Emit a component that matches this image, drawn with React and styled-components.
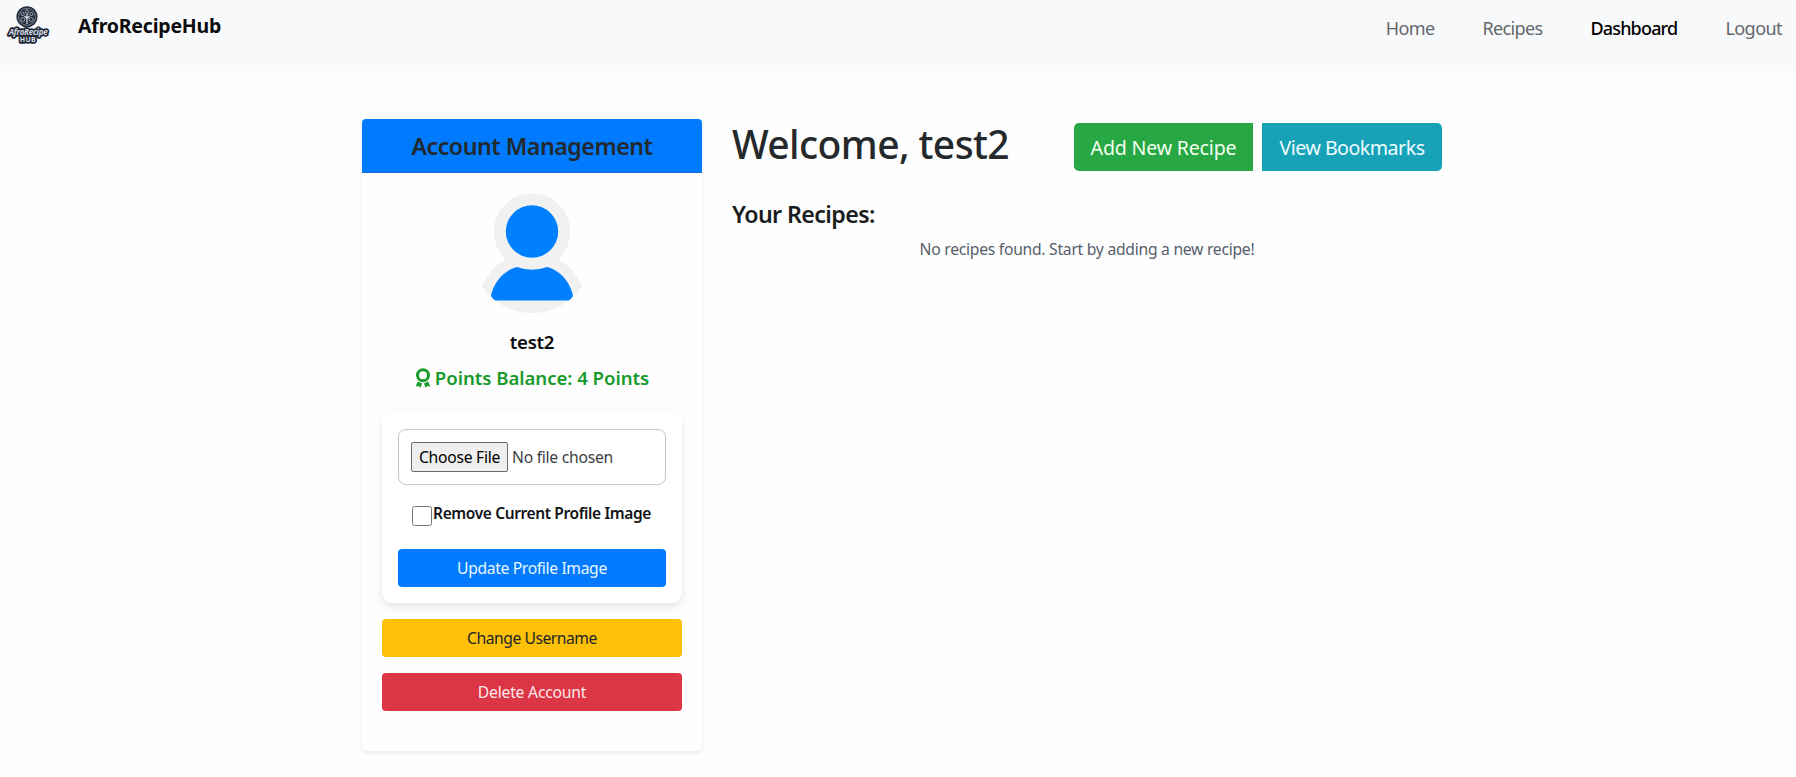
import React from "react";
import styled, { createGlobalStyle } from "styled-components";

const GlobalStyle = createGlobalStyle`
  * { box-sizing: border-box; }
  body {
    margin: 0;
    background: #fefefe;
    color: #212529;
    font-family: "Noto Sans", "Open Sans", sans-serif;
    font-size: 15.7px;
    line-height: 24px;
  }
  h1, h2, h3, p { margin: 0; }
  button { font-family: inherit; }
`;

const Navbar = styled.header`
  display: flex;
  justify-content: space-between;
  align-items: flex-start;
  height: 71px;
  padding: 4px 14px 0 4px;
  background: #f8f9fb;
`;

const Brand = styled.a`
  display: flex;
  align-items: flex-start;
  gap: 26px;
`;

const LogoMark = styled.svg`
  display: block;
  width: 48px;
  height: 48px;
  overflow: visible;
`;

const BrandName = styled.span`
  margin-top: 10px;
  color: #0b0c0e;
  font-size: 19.5px;
  font-weight: 700;
  letter-spacing: -0.2px;
`;

const Nav = styled.nav`
  display: flex;
  gap: 48px;
  padding-top: 12px;
`;

const NavLink = styled.a`
  color: ${(p) => (p.$active ? "#000" : "#63666a")};
  font-size: 18px;
  font-weight: ${(p) => (p.$active ? 500 : 400)};
  letter-spacing: ${(p) => p.$track}px;
  white-space: nowrap;
`;

const Page = styled.main`
  display: flex;
  align-items: flex-start;
  gap: 30px;
  padding: 48px 354px 12px 362px;
`;

const Card = styled.aside`
  width: 340px;
  border-radius: 4px;
  background: #fefefe;
  box-shadow: 0 2px 4px rgba(0, 0, 0, 0.085);
`;

const CardHeader = styled.div`
  display: flex;
  align-items: center;
  justify-content: center;
  height: 54px;
  border-bottom: 1px solid #0a6bd6;
  border-radius: 4px 4px 0 0;
  background: #007bff;
`;

const CardTitle = styled.h3`
  color: #23292c;
  font-size: 23.2px;
  font-weight: 600;
  line-height: 28px;
  letter-spacing: -0.48px;
`;

const CardBody = styled.div`
  display: flex;
  flex-direction: column;
  padding: 20px 20px 40px;
`;

const Avatar = styled.svg`
  display: block;
  width: 120px;
  height: 120px;
  margin: 0 auto;
`;

const Username = styled.p`
  margin-top: 17px;
  color: #0c0d0e;
  font-size: 18.6px;
  font-weight: 600;
  letter-spacing: -0.3px;
  text-align: center;
`;

const Points = styled.p`
  display: flex;
  align-items: center;
  justify-content: center;
  gap: 4px;
  margin-top: 12px;
  color: #189a2d;
  font-size: 18.6px;
  font-weight: 600;
  letter-spacing: -0.03px;
  white-space: nowrap;
`;

const MedalIcon = styled.svg`
  width: 16px;
  height: 20px;
  margin-top: -1px;
`;

const ImageForm = styled.form`
  display: flex;
  flex-direction: column;
  margin-top: 22px;
  padding: 17px 16px 16px;
  border-radius: 10px;
  background: #fff;
  box-shadow: 0 4px 8px rgba(0, 0, 0, 0.1);
`;

const FileField = styled.div`
  display: flex;
  align-items: center;
  gap: 4px;
  height: 56px;
  padding-left: 12px;
  border: 1px solid #c6c6c6;
  border-radius: 8px;
`;

const ChooseFile = styled.button`
  width: 97px;
  height: 30px;
  padding: 0;
  border: 1px solid #6c6c6c;
  border-radius: 2px;
  background: #efefef;
  color: #000;
  font-size: 15.7px;
  line-height: 24px;
  letter-spacing: -0.28px;
`;

const FileName = styled.span`
  color: #3c4043;
  letter-spacing: -0.27px;
`;

const CheckRow = styled.label`
  display: flex;
  justify-content: center;
  align-items: flex-start;
  height: 27px;
  margin: 16px 1px 0 0;
  color: #111315;
  font-size: 15.5px;
  font-weight: 600;
  letter-spacing: -0.38px;
  white-space: nowrap;
`;

const Checkbox = styled.input`
  appearance: none;
  flex: none;
  width: 20px;
  height: 20px;
  margin: 5px 1px 0 0;
  border: 1px solid #767676;
  border-radius: 2.5px;
  background: #fff;
`;

const tones = {
  primary: ["#007bff", "#e8f6ff"],
  warning: ["#ffc107", "#212529"],
  danger: ["#dc3545", "#ffe9ec"],
  success: ["#28a745", "#f3fff0"],
  info: ["#17a2b8", "#effdff"],
};

const Button = styled.button`
  height: 38px;
  margin-top: ${(p) => p.$gap ?? 16}px;
  padding: 0;
  border: 0;
  border-radius: 4px;
  background: ${(p) => tones[p.$tone][0]};
  color: ${(p) => tones[p.$tone][1]};
  font-size: 15.7px;
  line-height: 24px;
  letter-spacing: ${(p) => p.$track}px;
`;

const Content = styled.section`
  flex: 1;
`;

const TitleRow = styled.div`
  display: flex;
  justify-content: space-between;
  align-items: flex-start;
`;

const Title = styled.h1`
  color: #25292b;
  font-size: 39px;
  font-weight: 500;
  line-height: 50px;
  letter-spacing: -0.6px;
  white-space: nowrap;
`;

const ButtonGroup = styled.div`
  display: flex;
  gap: 9px;
  padding-top: 4px;
`;

const LargeButton = styled(Button)`
  width: ${(p) => p.$width}px;
  height: 48px;
  padding-top: 2px;
  border-radius: ${(p) => (p.$side === "left" ? "5px 0 0 5px" : "0 5px 5px 0")};
  font-size: 19.6px;
`;

const SectionTitle = styled.h2`
  margin-top: 27px;
  color: #1a1d20;
  font-size: 23.2px;
  font-weight: 600;
  line-height: 33px;
  letter-spacing: -0.6px;
`;

const EmptyNote = styled.p`
  margin-top: 6px;
  color: #56606b;
  letter-spacing: -0.27px;
  text-align: center;
`;

const Logo = () => (
  <LogoMark viewBox="0 0 48 48">
    <circle cx="23" cy="12.8" r="10.6" fill="#232d3b" />
    <circle cx="23" cy="12.8" r="8.5" fill="none" stroke="#9aa3ae" strokeWidth="0.7" />
    <g fill="none" stroke="#a4adb8" strokeWidth="0.9">
      <circle cx="23" cy="7.6" r="1.7" />
      <circle cx="18.6" cy="10" r="1.6" />
      <circle cx="27.4" cy="10" r="1.6" />
      <circle cx="18.8" cy="15.6" r="2" />
      <circle cx="27.2" cy="15.6" r="2" />
      <path d="M23 9.5V20M20.5 12l2.5 2.5 2.5-2.5" stroke="#e6e9ed" strokeWidth="1.1" />
    </g>
    <g
      fill="#d9dde2"
      stroke="#1c2634"
      strokeWidth="3.4"
      strokeLinejoin="round"
      paintOrder="stroke"
      fontFamily="Open Sans, sans-serif"
      fontWeight="700"
      textAnchor="middle"
    >
      <text x="24" y="37.8" fontSize="7" letterSpacing="0.3">HUB</text>
      <text x="24.2" y="31.4" fontSize="8" fontStyle="italic" letterSpacing="-0.25">AfroRecipe</text>
    </g>
  </LogoMark>
);

const Medal = () => (
  <MedalIcon viewBox="0 0 16 20" fill="currentColor">
    <circle cx="8" cy="7.2" r="5.5" fill="none" stroke="currentColor" strokeWidth="3" />
    <path d="M2.8 13.4L7.1 15.6 5.4 19.8 3.7 18.1 0.7 18.6Z" />
    <path d="M13.2 13.4L8.9 15.6 10.6 19.8 12.3 18.1 15.3 18.6Z" />
  </MedalIcon>
);

const ProfilePicture = () => (
  <Avatar viewBox="0 0 120 120">
    <defs>
      <clipPath id="round"><circle cx="60" cy="60" r="60" /></clipPath>
    </defs>
    <g clipPath="url(#round)" fill="#f1f1f1">
      <circle cx="60" cy="38.5" r="38.3" />
      <path d="M8 96C16 80 24 71 36 65H84C96 71 104 80 112 96V120H8Z" />
    </g>
    <circle cx="60" cy="38.5" r="26.2" fill="#0080ff" />
    <path
      d="M45 74Q60 79.5 75 74C88 77 99 90 101 103Q99.5 106 96.5 107.5H23.5Q20.5 106 19 103C21 90 32 77 45 74Z"
      fill="#0080ff"
    />
  </Avatar>
);

const links = [
  { label: "Home", track: -0.6 },
  { label: "Recipes", track: -0.65 },
  { label: "Dashboard", track: -0.82, active: true },
  { label: "Logout", track: -0.55 },
];

export default function App() {
  return (
    <>
      <GlobalStyle />
      <Navbar>
        <Brand>
          <Logo />
          <BrandName>AfroRecipeHub</BrandName>
        </Brand>
        <Nav>
          {links.map((l) => (
            <NavLink key={l.label} $track={l.track} $active={l.active}>{l.label}</NavLink>
          ))}
        </Nav>
      </Navbar>
      <Page>
        <Card>
          <CardHeader>
            <CardTitle>Account Management</CardTitle>
          </CardHeader>
          <CardBody>
            <ProfilePicture />
            <Username>test2</Username>
            <Points><Medal /> Points Balance: 4 Points</Points>
            <ImageForm>
              <FileField>
                <ChooseFile type="button">Choose File</ChooseFile>
                <FileName>No file chosen</FileName>
              </FileField>
              <CheckRow>
                <Checkbox type="checkbox" />
                Remove Current Profile Image
              </CheckRow>
              <Button type="button" $tone="primary" $gap={21} $track={-0.36}>Update Profile Image</Button>
            </ImageForm>
            <Button $tone="warning" $track={-0.48}>Change Username</Button>
            <Button $tone="danger" $track={-0.22}>Delete Account</Button>
          </CardBody>
        </Card>
        <Content>
          <TitleRow>
            <Title>Welcome, test2</Title>
            <ButtonGroup>
              <LargeButton $tone="success" $side="left" $width={179} $gap={0} $track={-0.2}>Add New Recipe</LargeButton>
              <LargeButton $tone="info" $side="right" $width={180} $gap={0} $track={-0.5}>View Bookmarks</LargeButton>
            </ButtonGroup>
          </TitleRow>
          <SectionTitle>Your Recipes:</SectionTitle>
          <EmptyNote>No recipes found. Start by adding a new recipe!</EmptyNote>
        </Content>
      </Page>
    </>
  );
}
